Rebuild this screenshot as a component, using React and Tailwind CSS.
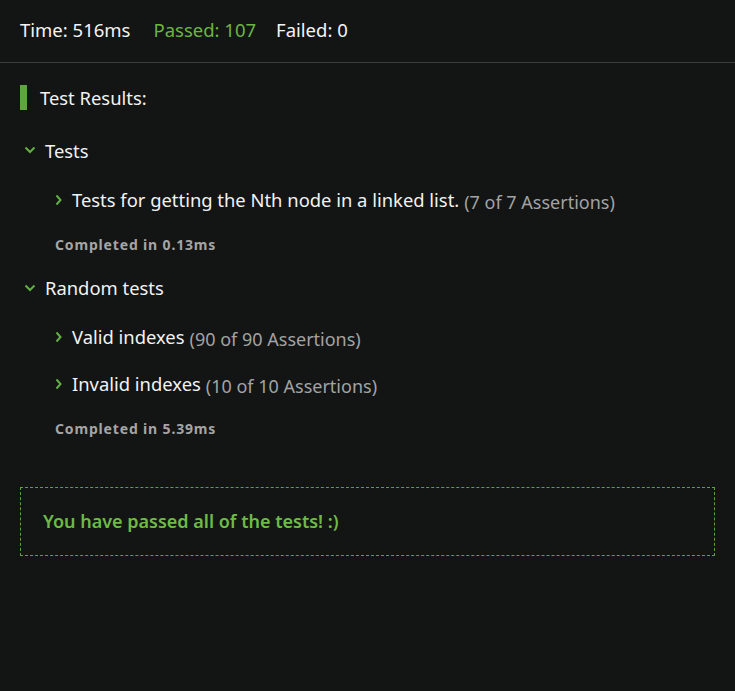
import React from 'react';

const Chevron = ({ open }) => (
  <svg width="12" height="12" viewBox="0 0 12 12" className="shrink-0">
    {open ? (
      <path d="M1.5 3.5 L6 8 L10.5 3.5" fill="none" stroke="#62b043" strokeWidth="2" />
    ) : (
      <path d="M3.5 1.5 L7.5 6 L3.5 10.5" fill="none" stroke="#62b043" strokeWidth="2" />
    )}
  </svg>
);

const Item = ({ title, count }) => (
  <div className="flex items-center gap-[7px] pl-[53px]">
    <Chevron />
    <span className="text-[18.4px] text-[#f2f2f2]">{title}</span>
    <span className="text-[18px] leading-none text-[#a3a3a3] mt-[4px] -ml-[2px]">{count}</span>
  </div>
);

const Group = ({ name, children, done }) => (
  <div>
    <div className="flex items-center gap-[9px] pl-[24px]">
      <Chevron open />
      <span className="text-[18.4px] text-[#f2f2f2]">{name}</span>
    </div>
    <div className="mt-[22px] flex flex-col gap-[19px]">{children}</div>
    <div className="pl-[55px] mt-[20px] text-[14px] font-bold tracking-[0.06em] text-[#a5a5a5]">
      {done}
    </div>
  </div>
);

export default function App() {
  return (
    <div
      className="w-[735px] h-[691px] bg-[#131414] overflow-hidden"
      style={{ fontFamily: '"Noto Sans", "Open Sans", sans-serif' }}
    >
      <div className="h-[63px] border-b border-[#3b3c3c] flex items-center px-[20px] gap-[23px] text-[18.5px] pb-[2px]">
        <span className="text-[#f4f4f4]">Time: 516ms</span>
        <span className="text-[#6cb545]">Passed: 107</span>
        <span className="text-[#f4f4f4] -ml-[3px]">Failed: 0</span>
      </div>

      <div className="px-[20px] pt-[21px]">
        <div className="flex items-center gap-[13px]">
          <div className="w-[7px] h-[25px] bg-[#5da642]" />
          <span className="text-[18.4px] text-[#f2f2f2]">Test Results:</span>
        </div>
      </div>

      <div className="mt-[25px] flex flex-col gap-[19px]">
        <Group name="Tests" done="Completed in 0.13ms">
          <Item title="Tests for getting the Nth node in a linked list." count="(7 of 7 Assertions)" />
        </Group>
        <Group name="Random tests" done="Completed in 5.39ms">
          <Item title="Valid indexes" count="(90 of 90 Assertions)" />
          <Item title="Invalid indexes" count="(10 of 10 Assertions)" />
        </Group>
      </div>

      <div className="mx-[20px] mt-[48px] h-[69px] border border-dashed border-[#5ea03f] flex items-center px-[22px]">
        <span className="text-[18px] font-semibold text-[#6cbb45]">
          You have passed all of the tests! :)
        </span>
      </div>
    </div>
  );
}
